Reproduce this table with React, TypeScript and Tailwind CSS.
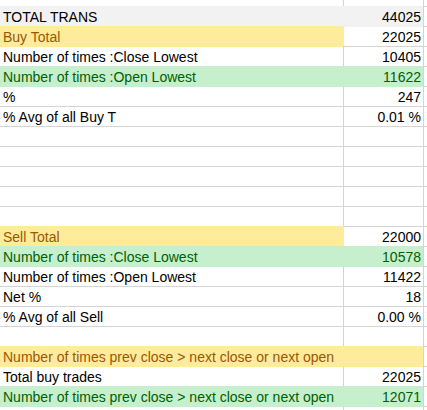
import React from "react";

type Fill = "none" | "gray" | "yellowA" | "yellow" | "green";

type RowDef = { a: string; b: string; fill: Fill };

const rows: RowDef[] = [
  { a: "TOTAL TRANS", b: "44025", fill: "gray" },
  { a: "Buy Total", b: "22025", fill: "yellowA" },
  { a: "Number of times :Close Lowest", b: "10405", fill: "none" },
  { a: "Number of times :Open Lowest", b: "11622", fill: "green" },
  { a: "%", b: "247", fill: "none" },
  { a: "% Avg of all Buy T", b: "0.01 %", fill: "none" },
  { a: "", b: "", fill: "none" },
  { a: "", b: "", fill: "none" },
  { a: "", b: "", fill: "none" },
  { a: "", b: "", fill: "none" },
  { a: "", b: "", fill: "none" },
  { a: "Sell Total", b: "22000", fill: "yellowA" },
  { a: "Number of times :Close Lowest", b: "10578", fill: "green" },
  { a: "Number of times :Open Lowest", b: "11422", fill: "none" },
  { a: "Net %", b: "18", fill: "none" },
  { a: "% Avg of all Sell", b: "0.00 %", fill: "none" },
  { a: "", b: "", fill: "none" },
  { a: "Number of times prev close > next close or next open", b: "", fill: "yellow" },
  { a: "Total buy trades", b: "22025", fill: "none" },
  { a: "Number of times prev close > next close or next open", b: "12071", fill: "green" },
  { a: "", b: "", fill: "none" },
];

const GRID = "#d4d4d4";

function fillA(f: Fill): string | null {
  if (f === "gray") return "#f2f2f2";
  if (f === "yellowA" || f === "yellow") return "#ffeb9c";
  if (f === "green") return "#c6efce";
  return null;
}
function fillB(f: Fill): string | null {
  if (f === "gray") return "#f2f2f2";
  if (f === "yellow") return "#ffeb9c";
  if (f === "green") return "#c6efce";
  return null;
}
function textA(f: Fill): string {
  if (f === "yellowA" || f === "yellow") return "#9c5700";
  if (f === "green") return "#006100";
  return "#000000";
}
function textB(f: Fill): string {
  if (f === "green") return "#006100";
  return "#000000";
}

export default function App() {
  return (
    <div
      className="w-[427px] h-[410px] overflow-hidden bg-white text-[14px] leading-[20px]"
      style={{ fontFamily: '"Liberation Sans", Arial, sans-serif' }}
    >
      <div className="flex h-[6px]">
        <div className="w-[343px]" />
        <div className="w-[80px] border-l border-[#d4d4d4]" />
        <div className="flex-1 border-l border-[#d4d4d4]" />
      </div>
      {rows.map((r, i) => {
        const prev = i > 0 ? rows[i - 1].fill : "none";
        const fa = fillA(r.fill);
        const fb = fillB(r.fill);
        const pa = fillA(prev);
        const pb = fillB(prev);
        const topA = fa ?? pa ?? GRID;
        const topB = fb ?? pb ?? GRID;
        const leftB = fb && fa ? fb : fa && !fb ? fa : GRID;
        const overflow = r.fill === "yellow" || (r.fill === "green" && r.a.length > 40);
        return (
          <div key={i} className="flex h-[20px] relative">
            <div
              className="w-[343px] border-t pl-[3px] whitespace-nowrap relative z-10"
              style={{
                backgroundColor: fa ?? "transparent",
                borderTopColor: topA,
                color: textA(r.fill),
                overflow: overflow ? "visible" : "hidden",
              }}
            >
              {r.a}
            </div>
            <div
              className="w-[80px] border-t border-l pr-[2px] text-right whitespace-nowrap"
              style={{
                backgroundColor: fb ?? "transparent",
                borderTopColor: topB,
                borderLeftColor: leftB,
                color: textB(r.fill),
              }}
            >
              {r.b}
            </div>
            <div
              className="flex-1 border-t border-l"
              style={{ borderTopColor: GRID, borderLeftColor: GRID }}
            />
          </div>
        );
      })}
    </div>
  );
}
